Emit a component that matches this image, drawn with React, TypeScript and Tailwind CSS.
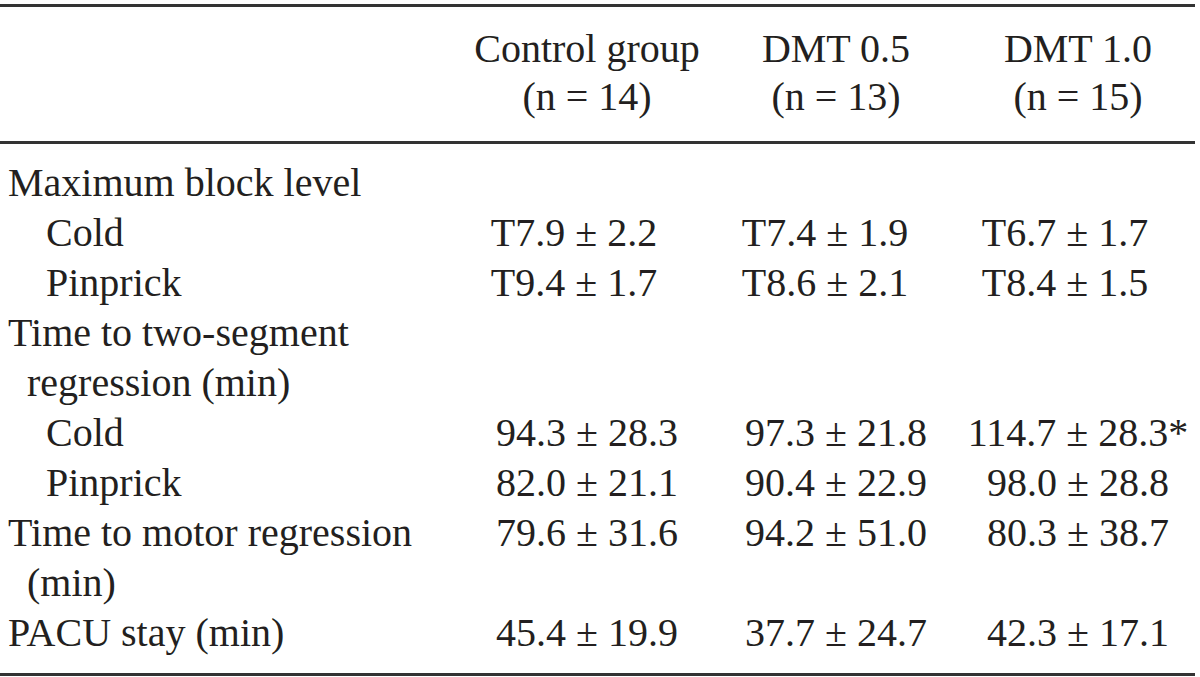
import React from "react";

type Row = { label: string; indent: 0 | 1 | 2; vals?: [string, string, string]; shift?: boolean };

const rows: Row[] = [
  { label: "Maximum block level", indent: 0 },
  { label: "Cold", indent: 2, vals: ["T7.9 ± 2.2", "T7.4 ± 1.9", "T6.7 ± 1.7"], shift: true },
  { label: "Pinprick", indent: 2, vals: ["T9.4 ± 1.7", "T8.6 ± 2.1", "T8.4 ± 1.5"], shift: true },
  { label: "Time to two-segment", indent: 0 },
  { label: "regression (min)", indent: 1 },
  { label: "Cold", indent: 2, vals: ["94.3 ± 28.3", "97.3 ± 21.8", "114.7 ± 28.3*"] },
  { label: "Pinprick", indent: 2, vals: ["82.0 ± 21.1", "90.4 ± 22.9", "98.0 ± 28.8"] },
  { label: "Time to motor regression", indent: 0, vals: ["79.6 ± 31.6", "94.2 ± 51.0", "80.3 ± 38.7"] },
  { label: "(min)", indent: 1 },
  { label: "PACU stay (min)", indent: 0, vals: ["45.4 ± 19.9", "37.7 ± 24.7", "42.3 ± 17.1"] },
];

const indentCls = ["pl-[8px]", "pl-[27px]", "pl-[46px]"];

export default function App() {
  return (
    <div
      className="w-[1200px] h-[677px] bg-white text-[#231f20] overflow-hidden"
      style={{ fontFamily: '"Liberation Serif", "Times New Roman", serif' }}
    >
      <div className="w-[1195px] pt-[4px]">
        <div className="h-[3px] bg-[#333333]" />
        <div className="grid grid-cols-[463px_248px_250px_234px] text-[40px] leading-[48px] pt-[18px] pb-[20px]">
          <div />
          <div className="text-center">
            <div>Control group</div>
            <div>(n = 14)</div>
          </div>
          <div className="text-center">
            <div>DMT 0.5</div>
            <div>(n = 13)</div>
          </div>
          <div className="text-center">
            <div>DMT 1.0</div>
            <div>(n = 15)</div>
          </div>
        </div>
        <div className="h-[3px] bg-[#333333]" />
        <div className="pt-[14px] pb-[15px]">
          {rows.map((r, i) => (
            <div
              key={i}
              className="grid grid-cols-[463px_248px_250px_234px] text-[40px] leading-[50px] whitespace-nowrap"
            >
              <div className={indentCls[r.indent]}>{r.label}</div>
              <div className={r.shift ? "text-center pr-[26px]" : "text-center"}>{r.vals ? r.vals[0] : ""}</div>
              <div className={r.shift ? "text-center pr-[22px]" : "text-center"}>{r.vals ? r.vals[1] : ""}</div>
              <div className={r.shift ? "text-center pr-[26px]" : "text-center"}>{r.vals ? r.vals[2] : ""}</div>
            </div>
          ))}
        </div>
        <div className="h-[3px] bg-[#333333]" />
      </div>
    </div>
  );
}
